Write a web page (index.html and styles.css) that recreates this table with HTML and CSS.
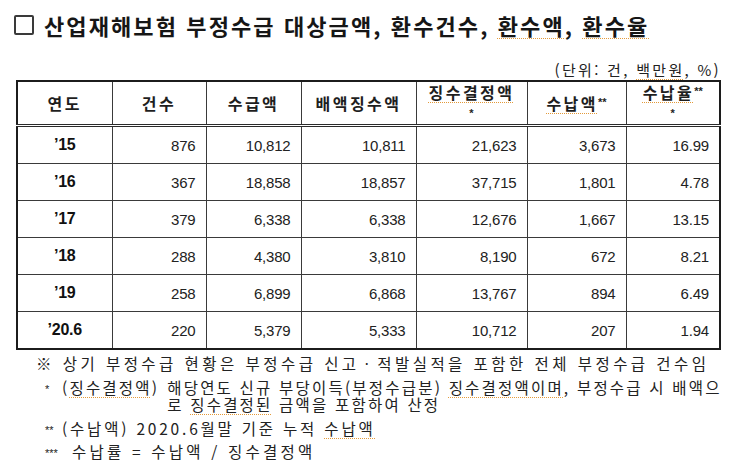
FILE: index.html
```html
<!DOCTYPE html>
<html lang="ko">
<head>
<meta charset="utf-8">
<link rel="stylesheet" href="styles.css">
</head>
<body>
<div class="page">
  <h1 class="title"><span class="box"></span><span>산업재해보험 부정수급 대상금액, 환수건수, <span class="sp">환수액</span>, <span class="sp">환수율</span></span></h1>
  <div class="unit">(단위: 건, <span class="sp">백만원</span>, %)</div>
  <table class="grid">
    <colgroup>
      <col class="c1"><col class="c2"><col class="c3"><col class="c4"><col class="c5"><col class="c6"><col class="c7">
    </colgroup>
    <thead>
      <tr>
        <th>연도</th>
        <th>건수</th>
        <th>수급액</th>
        <th>배액징수액</th>
        <th class="two"><span class="sp">징수결정액</span><br><span class="star">*</span></th>
        <th><span class="sp">수납액</span><span class="sup">**</span></th>
        <th class="two"><span class="sp">수납율</span><span class="sup">**</span><br><span class="star">*</span></th>
      </tr>
    </thead>
    <tbody>
      <tr><td class="yr">’15</td><td>876</td><td>10,812</td><td>10,811</td><td>21,623</td><td>3,673</td><td>16.99</td></tr>
      <tr><td class="yr">’16</td><td>367</td><td>18,858</td><td>18,857</td><td>37,715</td><td>1,801</td><td>4.78</td></tr>
      <tr><td class="yr">’17</td><td>379</td><td>6,338</td><td>6,338</td><td>12,676</td><td>1,667</td><td>13.15</td></tr>
      <tr><td class="yr">’18</td><td>288</td><td>4,380</td><td>3,810</td><td>8,190</td><td>672</td><td>8.21</td></tr>
      <tr><td class="yr">’19</td><td>258</td><td>6,899</td><td>6,868</td><td>13,767</td><td>894</td><td>6.49</td></tr>
      <tr><td class="yr">’20.6</td><td>220</td><td>5,379</td><td>5,333</td><td>10,712</td><td>207</td><td>1.94</td></tr>
    </tbody>
  </table>
  <div class="notes">
    <p class="note-main">※ 상기 부정수급 현황은 부정수급 신고ㆍ적발실적을 포함한 전체 부정수급 건수임</p>
    <div class="note n1">
      <span class="mark">*</span>
      <span class="label">(<span class="sp">징수결정액</span>)</span>
      <span class="body">해당연도 신규 부당이득(부정수급분) <span class="sp">징수결정액이며</span>, 부정수급 시 배액으<br>로 <span class="sp">징수결정된</span> 금액을 포함하여 산정</span>
    </div>
    <div class="note n2">
      <span class="mark">**</span>
      <span class="body">(수납액) 2020.6월말 기준 누적 <span class="sp">수납액</span></span>
    </div>
    <div class="note n3">
      <span class="mark m3">***</span>
      <span class="body"><span class="sp">수납률</span> = <span class="sp">수납액</span> / <span class="sp">징수결정액</span></span>
    </div>
  </div>
</div>
</body>
</html>
```

FILE: styles.css
```css
html, body {
  margin: 0;
  padding: 0;
  background: #ffffff;
}

body {
  color: #1a1a1a;
  font-family: "Noto Sans CJK KR", "Noto Sans", sans-serif;
}

.page {
  width: 703px;
  padding: 13px 0 0 16px;
}

.title {
  display: flex;
  align-items: center;
  gap: 10px;
  margin: 0 0 0 -2px;
  height: 24px;
  font-size: 22px;
  font-weight: 700;
  letter-spacing: 2.1px;
  line-height: 24px;
  color: #161616;
  white-space: nowrap;
}

.box {
  flex: none;
  width: 16px;
  height: 16px;
  border: 2px solid #3a3a3a;
  border-radius: 2px;
}

.sp {
  text-decoration: underline dotted #e39a3a;
  text-underline-offset: 3px;
  text-decoration-thickness: 1px;
}

.unit {
  margin-top: 22px;
  height: 21px;
  text-align: right;
  font-size: 15px;
  line-height: 21px;
  letter-spacing: 2.3px;
  color: #222;
  margin-right: -2px;
}

.grid {
  border-collapse: collapse;
  border: 2px solid #1c1c1c;
  width: 703px;
  table-layout: fixed;
}

.c1 { width: 95px; }
.c2 { width: 94px; }
.c3 { width: 95px; }
.c4 { width: 115px; }
.c5 { width: 111px; }
.c6 { width: 99px; }
.c7 { width: 94px; }

.grid th {
  height: 41px;
  padding: 0;
  border: 1px solid #3a3a3a;
  border-bottom: 3px double #2a2a2a;
  font-size: 16px;
  font-weight: 700;
  letter-spacing: 2.5px;
  line-height: 18px;
  color: #1e1e1e;
  vertical-align: middle;
}

.grid th.two {
  vertical-align: top;
  padding-top: 1px;
}

.star {
  font-family: "Liberation Sans", Arial, sans-serif;
  font-size: 11px;
  line-height: 14px;
  letter-spacing: 0;
}

.sup {
  font-family: "Liberation Sans", Arial, sans-serif;
  font-size: 11px;
  letter-spacing: 0;
  vertical-align: 4px;
  line-height: 0;
}

.grid td {
  height: 36px;
  padding: 0 10px 0 0;
  border: 1px solid #3a3a3a;
  text-align: right;
  font-family: "Liberation Sans", Arial, sans-serif;
  font-size: 15px;
  color: #222;
  letter-spacing: -0.2px;
}

.grid td.yr {
  padding: 0;
  text-align: center;
  font-weight: 700;
  font-size: 16px;
  color: #111;
}

.notes {
  padding-top: 1px;
  font-size: 15.5px;
  color: #222;
}

.note-main {
  margin: 0 0 0 20px;
  height: 24px;
  line-height: 24px;
  letter-spacing: 3.45px;
  white-space: nowrap;
}

.note {
  display: flex;
  align-items: flex-start;
  margin-left: 29px;
  line-height: 18px;
  white-space: nowrap;
}

.n1 {
  margin-top: 3px;
  letter-spacing: 2.2px;
}

.n2 {
  margin-top: 6px;
  letter-spacing: 2.8px;
}

.n3 {
  margin-top: 5px;
  letter-spacing: 3.2px;
}

.note .body {
  line-height: 17px;
  padding-top: 1px;
}

.mark {
  flex: none;
  width: 17px;
  padding-top: 5px;
  font-family: "Liberation Sans", Arial, sans-serif;
  font-size: 11px;
  line-height: 12px;
  letter-spacing: 0;
}

.mark.m3 {
  width: 27px;
}

.label {
  margin-right: 8px;
}
```
